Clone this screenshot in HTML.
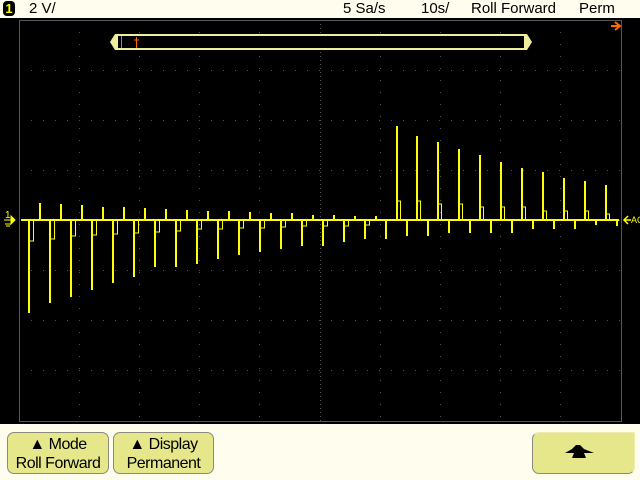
<!DOCTYPE html>
<html><head><meta charset="utf-8"><style>
body{margin:0;width:640px;height:480px;overflow:hidden;background:#fffdee;font-family:"Liberation Sans",sans-serif;}
.top{position:absolute;left:0;top:0;width:640px;height:18px;background:#fffdee;font-size:15px;color:#000;}
.top span{position:absolute;top:0;line-height:17px;}
.scr{position:absolute;left:0;top:18px;width:640px;height:406px;background:#000;}
.btn{position:absolute;top:432px;height:42px;background:#e6e68a;border:1px solid #8a8a80;border-radius:7px;box-sizing:border-box;text-align:center;font-size:16px;line-height:19px;color:#000;padding-top:2px;letter-spacing:-0.5px}
</style></head><body>
<div class="top">
<span style="left:3px;top:1px;width:12px;height:15px;background:#000;border-radius:4px;color:#ff0;font-weight:bold;text-align:center;line-height:15px;font-size:13px">1</span>
<span style="left:29px">2 V/</span>
<span style="left:343px">5 Sa/s</span>
<span style="left:421px">10s/</span>
<span style="left:471px">Roll Forward</span>
<span style="left:579px">Perm</span>
</div>
<div class="scr"></div>
<svg width="640" height="480" style="position:absolute;left:0;top:0" xmlns="http://www.w3.org/2000/svg">
<g stroke="#555" stroke-width="1" stroke-dasharray="1 11">
<line x1="79.5" y1="20" x2="79.5" y2="421"/><line x1="139.5" y1="20" x2="139.5" y2="421"/><line x1="199.5" y1="20" x2="199.5" y2="421"/><line x1="259.5" y1="20" x2="259.5" y2="421"/><line x1="320.5" y1="20" x2="320.5" y2="421" stroke-dasharray="1 3"/><line x1="380.5" y1="20" x2="380.5" y2="421"/><line x1="440.5" y1="20" x2="440.5" y2="421"/><line x1="500.5" y1="20" x2="500.5" y2="421"/><line x1="560.5" y1="20" x2="560.5" y2="421"/>
<line x1="19" y1="70.5" x2="621" y2="70.5"/><line x1="19" y1="120.5" x2="621" y2="120.5"/><line x1="19" y1="170.5" x2="621" y2="170.5"/><line x1="19" y1="220.5" x2="621" y2="220.5" stroke-dasharray="1 3"/><line x1="19" y1="270.5" x2="621" y2="270.5"/><line x1="19" y1="320.5" x2="621" y2="320.5"/><line x1="19" y1="370.5" x2="621" y2="370.5"/>
</g>
<rect x="19.5" y="20.5" width="602" height="401" fill="none" stroke="#555"/>
<path d="M115 34 H527 L532 42 L527 50 H115 L110 42 Z" fill="#f0ee9c"/>
<rect x="118" y="36" width="406" height="12" fill="#000"/>
<line x1="121.5" y1="36" x2="121.5" y2="48" stroke="#ff6a00"/>
<path d="M136.5 37 V48 M134 40 H139" stroke="#ff6a00"/>
<path d="M611 26 H619 M615 22 L620 26 L615 30" stroke="#ff6a00" stroke-width="2" fill="none"/>
<line x1="21" y1="220" x2="619" y2="220" stroke="#ff0" stroke-width="2"/>
<g fill="#ff0">
<rect x="28" y="220" width="2" height="93"/><rect x="49" y="220" width="2" height="83"/><rect x="70" y="220" width="2" height="77"/><rect x="91" y="220" width="2" height="70"/><rect x="112" y="220" width="2" height="63"/><rect x="133" y="220" width="2" height="57"/><rect x="154" y="220" width="2" height="47"/><rect x="175" y="220" width="2" height="47"/><rect x="196" y="220" width="2" height="44"/><rect x="217" y="220" width="2" height="39"/><rect x="238" y="220" width="2" height="35"/><rect x="259" y="220" width="2" height="32"/><rect x="280" y="220" width="2" height="29"/><rect x="301" y="220" width="2" height="26"/><rect x="322" y="220" width="2" height="26"/><rect x="343" y="220" width="2" height="22"/><rect x="364" y="220" width="2" height="19"/><rect x="385" y="220" width="2" height="19"/>
<rect x="406" y="220" width="2" height="16"/><rect x="427" y="220" width="2" height="16"/><rect x="448" y="220" width="2" height="13"/><rect x="469" y="220" width="2" height="13"/><rect x="490" y="220" width="2" height="13"/><rect x="511" y="220" width="2" height="13"/><rect x="532" y="220" width="2" height="9"/><rect x="553" y="220" width="2" height="9"/><rect x="574" y="220" width="2" height="9"/><rect x="595" y="220" width="2" height="5"/><rect x="616" y="220" width="2" height="6"/>
<rect x="39" y="203" width="2" height="17"/><rect x="60" y="204" width="2" height="16"/><rect x="81" y="205" width="2" height="15"/><rect x="102" y="207" width="2" height="13"/><rect x="123" y="207" width="2" height="13"/><rect x="144" y="208" width="2" height="12"/><rect x="165" y="209" width="2" height="11"/><rect x="186" y="210" width="2" height="10"/><rect x="207" y="211" width="2" height="9"/><rect x="228" y="211" width="2" height="9"/><rect x="249" y="212" width="2" height="8"/><rect x="270" y="213" width="2" height="7"/><rect x="291" y="213" width="2" height="7"/><rect x="312" y="215" width="2" height="5"/><rect x="333" y="215" width="2" height="5"/><rect x="354" y="216" width="2" height="4"/><rect x="375" y="216" width="2" height="4"/>
<rect x="396" y="126" width="2" height="94"/><rect x="416" y="136" width="2" height="84"/><rect x="437" y="142" width="2" height="78"/><rect x="458" y="149" width="2" height="71"/><rect x="479" y="155" width="2" height="65"/><rect x="500" y="162" width="2" height="58"/><rect x="521" y="168" width="2" height="52"/><rect x="542" y="172" width="2" height="48"/><rect x="563" y="178" width="2" height="42"/><rect x="584" y="181" width="2" height="39"/><rect x="605" y="185" width="2" height="35"/>
</g>
<g stroke="#ff0" stroke-width="1" fill="none">
<path d="M29.5 220V241H33.5V220M50.5 220V239H54.5V220M71.5 220V236H75.5V220M92.5 220V235H96.5V220M113.5 220V234H117.5V220M134.5 220V233H138.5V220M155.5 220V232H159.5V220M176.5 220V231H180.5V220M197.5 220V229H201.5V220M218.5 220V229H222.5V220M239.5 220V228H243.5V220M260.5 220V228H264.5V220M281.5 220V227H285.5V220M302.5 220V226H306.5V220M323.5 220V226H327.5V220M344.5 220V226H348.5V220M365.5 220V225H369.5V220"/>
<path d="M397.5 220V201H400.5V220M417.5 220V201H420.5V220M438.5 220V204H441.5V220M459.5 220V204H462.5V220M480.5 220V207H483.5V220M501.5 220V207H504.5V220M522.5 220V207H525.5V220M543.5 220V211H546.5V220M564.5 220V211H567.5V220M585.5 220V211H588.5V220M606.5 220V214H609.5V220"/>
</g>
<text x="5" y="218" fill="#ff0" font-size="10" font-family="Liberation Sans">1</text>
<path d="M4 220 H14 M11 216 L15 220 L11 224 Z M5 224 H11 M6 226 H10" stroke="#ff0" fill="#ff0" stroke-width="1"/>
<path d="M624 220 H631 M628 216 L624 220 L628 224" stroke="#ff0" fill="none" stroke-width="1.5"/>
<text x="631" y="223" fill="#ff0" font-size="9" font-family="Liberation Sans">AC</text>
</svg>
<div class="btn" style="left:7px;width:102px">&#9650; Mode<br>Roll Forward</div>
<div class="btn" style="left:113px;width:101px">&#9650; Display<br>Permanent</div>
<div class="btn" style="left:532px;width:103px;border-top-right-radius:2px;border-top-color:#ecebb0;border-right-color:#ecebb0"></div>
<svg width="640" height="480" style="position:absolute;left:0;top:0">
<path d="M565 453 L572 449 L576 445 L580 445 L584 449 L594 453 Z M574 453 L572 458 L586 458 L584 453 Z" fill="#000"/>
</svg>
</body></html>
